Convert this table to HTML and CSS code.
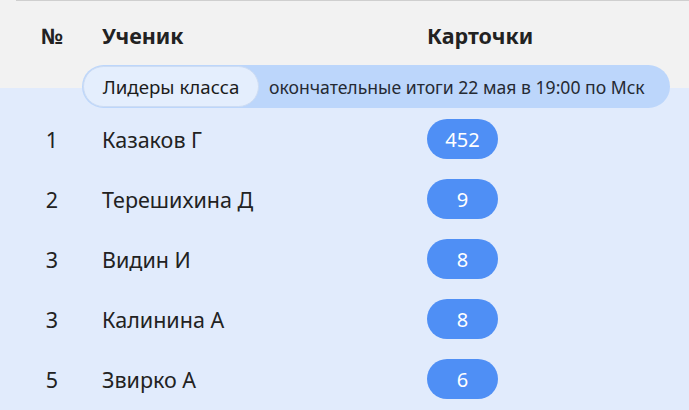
FILE: index.html
```html
<!DOCTYPE html>
<html lang="ru">
<head>
<meta charset="utf-8">
<link rel="stylesheet" href="styles.css">
</head>
<body>
<div class="page">
  <div class="row head">
    <div class="num">№</div>
    <div class="name">Ученик</div>
    <div class="cards">Карточки</div>
  </div>
  <div class="banner">
    <span class="tag">Лидеры класса</span>
    <span class="note">окончательные итоги 22 мая в 19:00 по Мск</span>
  </div>
  <div class="list">
    <div class="row"><div class="num">1</div><div class="name">Казаков Г</div><div class="cards"><span class="badge">452</span></div></div>
    <div class="row"><div class="num">2</div><div class="name">Терешихина Д</div><div class="cards"><span class="badge">9</span></div></div>
    <div class="row"><div class="num">3</div><div class="name">Видин И</div><div class="cards"><span class="badge">8</span></div></div>
    <div class="row"><div class="num">3</div><div class="name">Калинина А</div><div class="cards"><span class="badge">8</span></div></div>
    <div class="row"><div class="num">5</div><div class="name">Звирко А</div><div class="cards"><span class="badge">6</span></div></div>
  </div>
</div>
</body>
</html>
```
FILE: styles.css
```css
html, body {
  margin: 0;
  padding: 0;
}
body {
  width: 689px;
  height: 410px;
  overflow: hidden;
  font-family: "Noto Sans", "Open Sans", sans-serif;
  color: #222;
  background: #e1ebfc;
}
.page {
  height: 410px;
  background: linear-gradient(#f2f2f2 0, #f2f2f2 88px, #e1ebfc 88px);
}
.page::before {
  content: "";
  display: block;
  margin-left: 16px;
  height: 1px;
  background: #cfcfcf;
}
.row {
  display: grid;
  grid-template-columns: 40px 295px 1fr;
  column-gap: 30px;
  padding-left: 32px;
  align-items: center;
  height: 60px;
  font-size: 21.5px;
}
.num {
  text-align: center;
}
.head {
  height: 28px;
  margin-top: 20px;
  font-weight: 700;
  font-size: 21.5px;
}
.banner {
  margin: 16px 19px 0 82px;
  height: 43px;
  border-radius: 22px;
  background: #bcd6fb;
  display: flex;
  align-items: center;
}
.tag {
  box-sizing: border-box;
  width: 176px;
  height: 41px;
  margin-left: 1px;
  border-radius: 21px;
  background: #e4eefd;
  border: 1px solid #cddcf3;
  display: flex;
  align-items: center;
  justify-content: center;
  color: #1c1c1c;
  font-size: 18.7px;
}
.note {
  margin-left: 10px;
  color: #252a33;
  font-size: 17.6px;
}
.list {
  margin-top: 1px;
}
.badge {
  display: inline-flex;
  align-items: center;
  justify-content: center;
  width: 71px;
  height: 40px;
  border-radius: 20px;
  background: #4f8ff5;
  color: #fff;
  font-size: 20px;
}
```
